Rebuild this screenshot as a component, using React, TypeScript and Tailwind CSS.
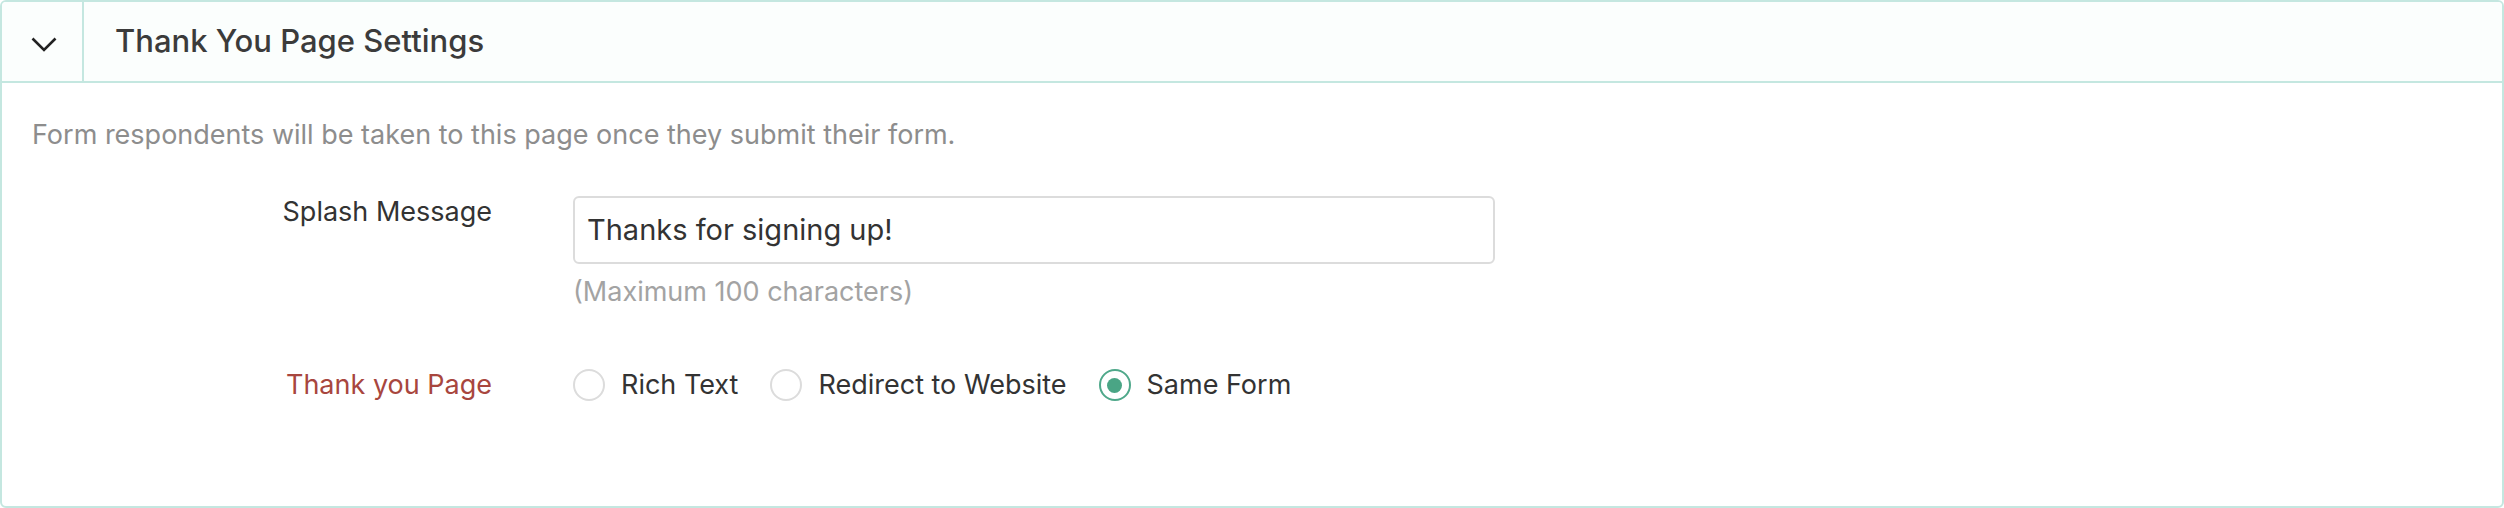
import { useState } from 'react';

const options = ['Rich Text', 'Redirect to Website', 'Same Form'];

export default function App() {
  const [choice, setChoice] = useState('Same Form');

  return (
    <div className="w-[2504px] h-[508px] bg-white font-['Inter',sans-serif]">
      <div className="h-full border-2 border-[#c4e7e0] rounded-[6px] overflow-hidden">
        <div className="flex h-[81px] border-b-2 border-[#c4e7e0] bg-[#fbfefd]">
          <div className="w-[82px] border-r-2 border-[#c4e7e0] flex items-center justify-center pl-[4px] pt-[6px]">
            <svg width="26" height="15" viewBox="0 0 26 15" fill="none">
              <path d="M1.5 1.5 L13 13 L24.5 1.5" stroke="#222" strokeWidth="2.6" />
            </svg>
          </div>
          <div className="flex items-center pl-[31px] text-[31px] font-medium text-[#3b3b3b]">Thank You Page Settings</div>
        </div>

        <div className="px-[30px] pt-[36px]">
          <p className="text-[27px] leading-[32px] text-[#8d8d8d]">Form respondents will be taken to this page once they submit their form.</p>

          <div className="flex mt-[45px]">
            <div className="w-[460px] text-right text-[27px] leading-[32px] text-[#333] pt-[0px]">Splash Message</div>
            <div className="ml-[81px] flex flex-col">
              <div className="w-[922px] h-[68px] border-2 border-[#dcdcdc] rounded-[6px] flex items-center px-[12px] text-[29px] text-[#333]">Thanks for signing up!</div>
              <div className="mt-[12px] text-[27px] leading-[32px] text-[#a3a3a3]">(Maximum 100 characters)</div>
            </div>
          </div>

          <div className="flex items-center mt-[57px]">
            <div className="w-[460px] text-right text-[27px] leading-[32px] text-[#a8463e]">Thank you Page</div>
            <div className="ml-[81px] flex items-center gap-[32px]">
              {options.map(o => (
                <label key={o} className="flex items-center gap-[16px] cursor-pointer" onClick={() => setChoice(o)}>
                  {choice === o ? (
                    <span className="w-[32px] h-[32px] rounded-full border-2 border-[#4fa88a] flex items-center justify-center">
                      <span className="w-[15px] h-[15px] rounded-full bg-[#4aa585]"></span>
                    </span>
                  ) : (
                    <span className="w-[32px] h-[32px] rounded-full border-2 border-[#dcdcdc]"></span>
                  )}
                  <span className="text-[27px] text-[#333]">{o}</span>
                </label>
              ))}
            </div>
          </div>
        </div>
      </div>
    </div>
  );
}
